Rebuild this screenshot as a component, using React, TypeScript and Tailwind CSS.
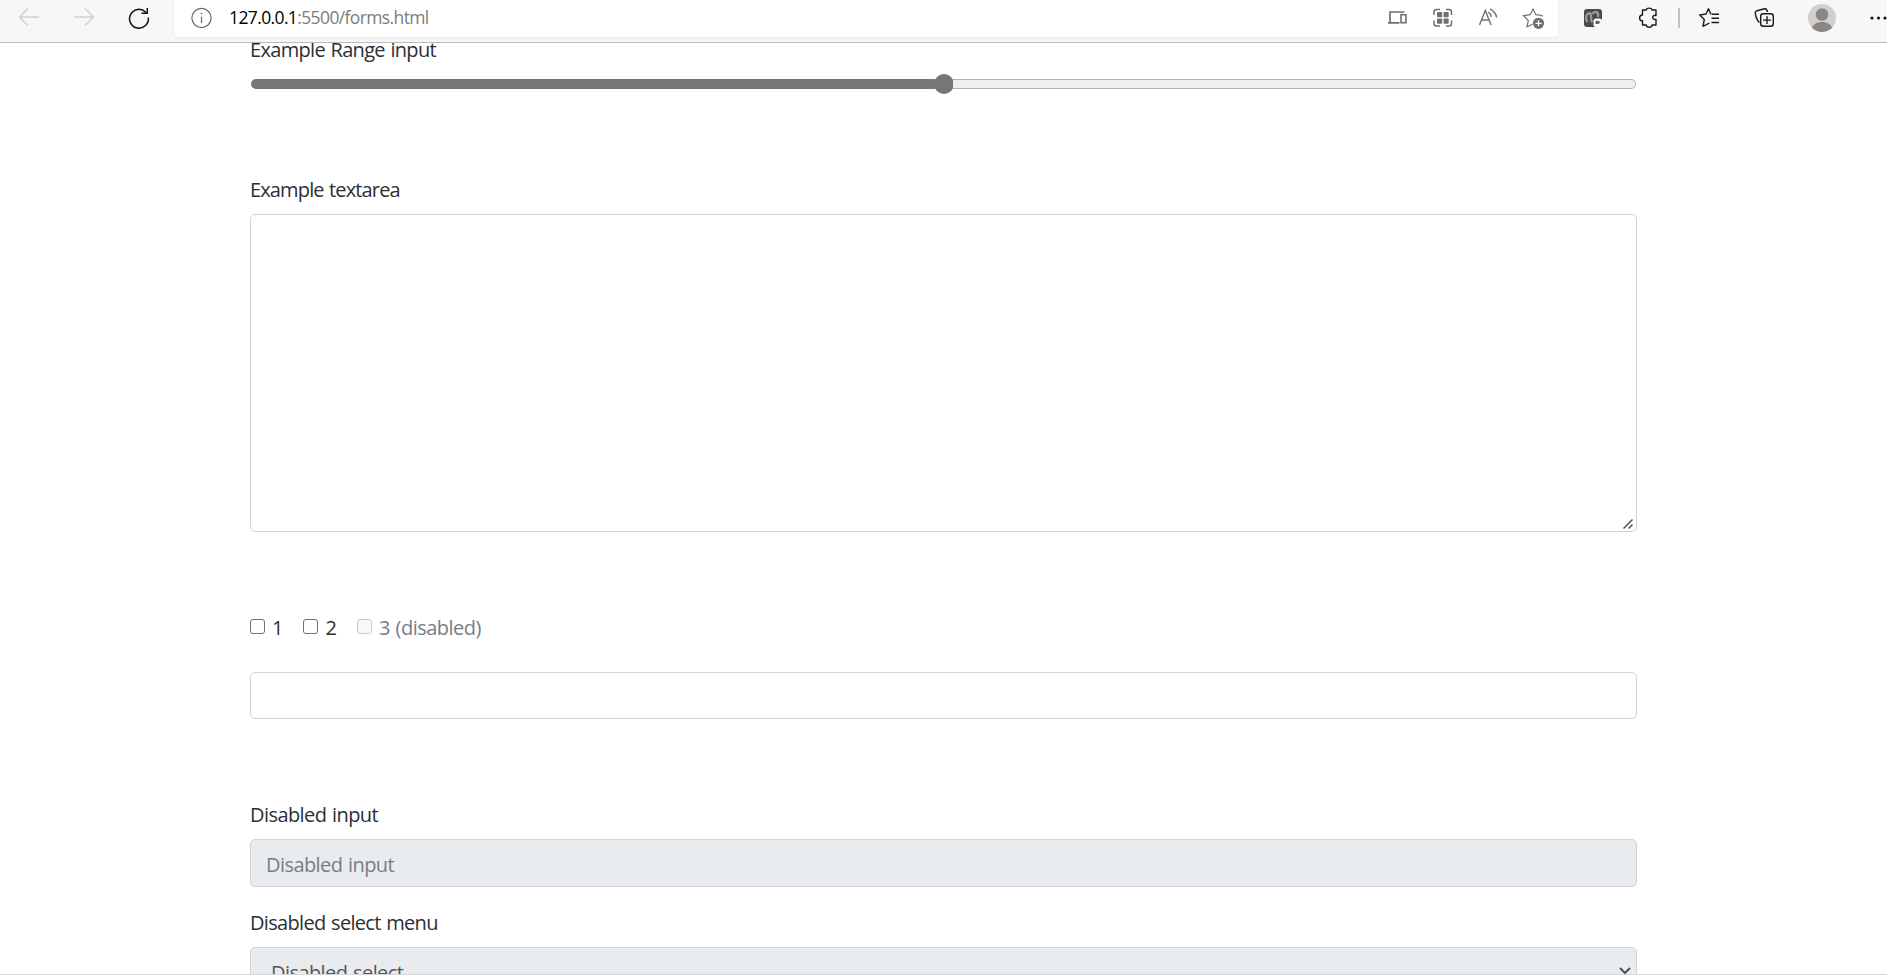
import React from 'react';

function BrowserBar() {
  return (
    <header className="relative z-10 flex h-[43px] shrink-0 border-b border-[#b9b9b9] bg-[#f7f7f7]">
      <div className="flex w-[174px] shrink-0 items-start">
        <svg width="174" height="36" fill="none" strokeWidth="1.3">
          <path d="M39 17H19.5M28 8.500L19.500 17L28 25.500" stroke="#cfcfcf" />
          <path d="M74 17H93.500M85 8.500L93.500 17L85 25.500" stroke="#cfcfcf" />
          <path d="M145.800 12.300A9.400 9.400 0 1 0 148.300 17.500M147.300 8V13.300H141.500" stroke="#111" strokeWidth="1.5" />
        </svg>
      </div>
      <div className="flex h-[37px] w-[1384px] shrink-0 items-start rounded-b-[5px] bg-white shadow-[0_1px_4px_rgba(0,0,0,0.06)]">
        <svg width="55" height="36" fill="none" stroke="#6b6b6b" strokeWidth="1.2">
          <circle cx="27.500" cy="18" r="9.600" />
          <path d="M27.500 16.500V23" />
          <circle cx="27.500" cy="13.500" r=".6" fill="#6b6b6b" strokeWidth=".6" />
        </svg>
        <div className="h-9 flex-1 whitespace-nowrap text-[17.5px] leading-[34px] tracking-[-0.62px] text-[#7c7c7c]">
          <span className="text-black">127.0.0.1</span>:5500/forms.html
        </div>
        <svg width="174" height="36" fill="none" stroke="#707070" strokeWidth="1.4">
          <path d="M6 22.700V12H20.500M4 22.800H15.500" strokeWidth="1.700" />
          <rect x="17" y="14.700" width="5" height="8" strokeWidth="1.600" />
          <path
            d="M50 15V12Q50 9.500 52.500 9.500H56M62 9.500H65Q67.500 9.500 67.500 12V15M50 20.500V23.500Q50 26 52.500 26H56M62 26H65Q67.500 26 67.500 23.500V20.500"
            strokeWidth="1.500"
          />
          <g fill="#707070" stroke="none">
            <rect x="53" y="12" width="5.200" height="5.200" rx="1" />
            <rect x="59.500" y="12" width="5.200" height="5.200" rx="1" />
            <rect x="53" y="18.500" width="5.200" height="5.200" rx="1" />
            <rect x="59.500" y="18.500" width="5.200" height="5.200" rx="1" />
          </g>
          <path d="M95.500 25L101.300 10.500L107 25M97.500 20H105M104.300 12.200Q107 14 107.200 17M106 8.800Q111.600 11.700 112.700 17.500" strokeWidth="1.400" />
          <path d="M158.500 16.500L158 15.500L151.800 14.700L149 9L146.200 14.700L139.500 15.700L144.300 20.500L143 26.700L148.500 24.200" strokeWidth="1.200" />
          <circle cx="154.500" cy="23.300" r="5.600" fill="#707070" stroke="none" />
          <path d="M151.500 23.300H157.500M154.500 20.300V26.300" stroke="white" strokeWidth="1.200" />
        </svg>
      </div>
      <svg className="min-w-0 flex-1" height="42" fill="none" stroke="#1a1a1a" strokeWidth="1.4">
        <rect x="26" y="9" width="18" height="18" rx="3" fill="#4a4a4a" stroke="none" />
        <path d="M29.500 22C26.500 18 29 12 32 13.500C34 15 32.500 20 34 22.500M34 14C37 10 41 12 40 17" stroke="#999" strokeWidth="2.300" />
        <rect x="35.500" y="18.500" width="8.500" height="8.500" rx="2.500" fill="white" stroke="none" />
        <path d="M37.500 20.800H40.500L42.500 22.300L40.500 24H37.500Z" fill="#666" stroke="none" />
        <path d="M84.500 10H88.300C88.300 7.500 94 7.500 94 10H98V15.500C94.800 14.200 92.500 19.800 98 19.500V25H94C94 28 88.300 28 88.300 25H84.500V20.800C80.700 20.800 80.700 15 84.500 15Z" strokeLinejoin="round" />
        <path d="M121 8V28" stroke="#b8b8b8" strokeWidth="1.700" />
        <path d="M154 14.200H161M153.500 18.300H161M153.500 22.500H161M153.500 14H152.800L150.500 8.800L148 14L141.700 15L146.300 19.500L145 26.300L151.500 23" strokeLinejoin="round" />
        <path d="M201.500 22.500Q199 21 197.500 14.500Q196.500 11.500 199 10.700L206.500 8.800Q208.800 8.500 209.500 12" />
        <rect x="202.700" y="13.700" width="12.600" height="12.600" rx="2.500" fill="#f7f7f7" />
        <path d="M209 16.300V24M205 20.100H213" />
        <circle cx="264" cy="18" r="14" fill="#d2d0ce" stroke="none" />
        <circle cx="264" cy="14.500" r="6.300" fill="#8a8683" stroke="none" />
        <path d="M254 28C256 20 272 20 274 28Q264 36 254 28Z" fill="#8a8683" stroke="none" />
        <g fill="#111" stroke="none">
          <circle cx="314" cy="18" r="1.600" />
          <circle cx="320.500" cy="18" r="1.600" />
          <circle cx="327" cy="18" r="1.600" />
        </g>
      </svg>
    </header>
  );
}

function Checkbox({ label, disabled = false }: { label: React.ReactNode; disabled?: boolean }) {
  return (
    <label className="flex h-[30px] items-start gap-[7px]">
      <span
        className={
          disabled
            ? 'mt-[7px] h-[15px] w-[15px] rounded-[3px] border border-[#c8c8c8] bg-[#f8f8f8]'
            : 'mt-[7px] h-[15px] w-[15px] rounded-[3px] border border-[#707070] bg-white'
        }
      />
      <span className={disabled ? 'pt-px text-[#757e86]' : 'pt-px'}>{label}</span>
    </label>
  );
}

export default function App() {
  return (
    <div className="flex h-[975px] w-[1887px] flex-col overflow-hidden bg-white font-['Open_Sans','Noto_Sans',sans-serif] text-[20px] leading-[30px] text-[#2c3034]">
      <BrowserBar />
      <main className="min-h-0 flex-1 overflow-hidden border-b border-[#dcd8da]">
        <form className="mx-auto -mt-[8px] flex w-[1387px] flex-col whitespace-nowrap">
          <div className="h-[30px] tracking-[-0.68px] [word-spacing:1px]">Example Range input</div>
          <div className="mx-px mt-[9px] flex h-5 items-center">
            <div className="h-[10px] w-[684px] rounded-l-full bg-[#767676]" />
            <div className="-mx-px h-5 w-5 rounded-full bg-[#767676]" />
            <div className="h-[10px] flex-1 rounded-r-full border border-l-0 border-[#b2b2b2] bg-[#efefef]" />
          </div>
          <div className="mt-[81px] h-[30px] tracking-[-0.86px] [word-spacing:1px]">Example textarea</div>
          <div className="mt-[9px] flex h-[318px] items-end justify-end rounded-[5px] border border-[#ced4da] px-[3px] py-[2px]">
            <svg width="10" height="10" fill="none" stroke="#505050" strokeWidth="1.5">
              <path d="M.5 9.500L9.500 .5M5.500 9.500L9.500 5.500" />
            </svg>
          </div>
          <div className="mt-20 flex gap-[20.5px] tracking-[-0.5px] [word-spacing:1px]">
            <Checkbox label="1" />
            <Checkbox label="2" />
            <Checkbox label="3 (disabled)" disabled />
          </div>
          <div className="mt-[30px] h-[47px] rounded-[5px] border border-[#ced4da]" />
          <div className="mt-[81px] h-[30px] tracking-[-0.57px] [word-spacing:1px]">Disabled input</div>
          <div className="mt-[9px] h-12 rounded-[5px] border border-[#ced4da] bg-[#e9ecef] px-[15px] pt-[10px] tracking-[-0.57px] text-[#757e86] [word-spacing:1px]">
            Disabled input
          </div>
          <div className="mt-[21px] h-[30px] tracking-[-0.68px] [word-spacing:1px]">Disabled select menu</div>
          <div className="mt-[9px] flex h-12 items-start justify-between rounded-[5px] border border-[#ced4da] bg-[#e9ecef] pl-5 pr-[5px] pt-[9px] tracking-[-0.57px] text-[#50575e] [word-spacing:1px]">
            <span className="pt-px">Disabled select</span>
            <svg className="mt-[10px]" width="12" height="8" fill="none" stroke="#495057" strokeWidth="2">
              <path d="M1 1L6 6L11 1" />
            </svg>
          </div>
        </form>
      </main>
    </div>
  );
}
